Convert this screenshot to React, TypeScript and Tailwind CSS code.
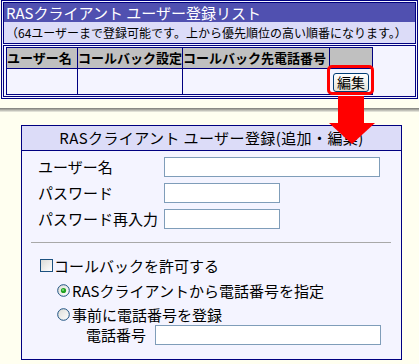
import React from 'react';

const font = "font-['Noto_Sans_CJK_JP','Noto_Sans_CJK_SC',sans-serif]";

function CheckBox() {
    return (
        <span className="inline-block w-[13px] h-[13px] border border-[#1c5180] bg-gradient-to-br from-[#dcdcd7] to-white" />
    );
}

function Radio({ checked }: { checked?: boolean }) {
    return (
        <svg width="13" height="13" viewBox="0 0 13 13">
            <defs>
                <linearGradient id="rg" x1="0" y1="0" x2="1" y2="1">
                    <stop offset="0" stopColor="#dcdcd7" />
                    <stop offset="1" stopColor="#ffffff" />
                </linearGradient>
            </defs>
            <circle cx="6.5" cy="6.5" r="5.8" fill="url(#rg)" stroke="#1c5180" strokeWidth="1" />
            {checked && <circle cx="6.5" cy="6.5" r="2.6" fill="#21a121" />}
            {checked && <circle cx="6" cy="6" r="1" fill="#7ee07e" />}
        </svg>
    );
}

export default function App() {
    const input = 'h-[20px] border border-[#7f9db9] bg-white';

    return (
        <div className={`relative w-[419px] h-[364px] overflow-hidden bg-[#fffff0] text-black ${font}`}>
            {/* upper list panel */}
            <div className="ml-[1px] w-[417px] border border-[#000080] bg-[#f4f4ff] p-px">
                <div className="border border-[#000080]">
                    <div className="h-[19px] bg-[#5050b0] pl-[2px] text-[15px] leading-[19px] text-white whitespace-nowrap">
                        RASクライアント ユーザー登録リスト
                    </div>
                    <div className="h-[21px] bg-[#dcdcf8] pl-[2px] text-[12px] leading-[21px] whitespace-nowrap">
                        （64ユーザーまで登録可能です。上から優先順位の高い順番になります。）
                    </div>
                </div>
                <div className="mt-px border border-[#000080] p-px">
                    <table className="ml-px border-collapse table-fixed w-[366px]">
                        <colgroup>
                            <col className="w-[71px]" />
                            <col className="w-[105px]" />
                            <col className="w-[147px]" />
                            <col className="w-[43px]" />
                        </colgroup>
                        <thead>
                            <tr className="h-[21px] bg-[#c0c0c0] text-[13px] font-bold leading-[20px]">
                                <th className="border border-[#000080] p-0 text-left whitespace-nowrap">ユーザー名</th>
                                <th className="border border-[#000080] p-0 text-left whitespace-nowrap">コールバック設定</th>
                                <th className="border border-[#000080] p-0 text-left whitespace-nowrap">コールバック先電話番号</th>
                                <th className="border border-[#000080] p-0"></th>
                            </tr>
                        </thead>
                        <tbody>
                            <tr className="h-[24px]">
                                <td className="border border-[#000080] p-0"></td>
                                <td className="border border-[#000080] p-0"></td>
                                <td className="border border-[#000080] p-0"></td>
                                <td className="border border-[#000080] p-0 text-center align-bottom">
                                    <button className="mb-[2px] h-[19px] w-[36px] rounded-[3px] border border-[#003c74] bg-gradient-to-b from-white to-[#e6e3d6] text-[14px] leading-[16px]">
                                        編集
                                    </button>
                                </td>
                            </tr>
                        </tbody>
                    </table>
                </div>
            </div>

            {/* screenshot edge */}
            <div className="mt-[9px] h-[4px] bg-gradient-to-b from-[#7c7c78] to-[#f0f0e4]" />

            {/* lower edit panel */}
            <div className="ml-[21px] mt-[13px] w-[381px] h-[235px] border border-[#000080] bg-[#f4f4ff]">
                <div className="h-[25px] border-b border-[#000080] bg-[#dcdcf8] text-center text-[15px] leading-[24px] tracking-[0.4px] whitespace-nowrap">
                    RASクライアント ユーザー登録(追加・編集)
                </div>
                <div className="pt-[6px] text-[15px] leading-[20px]">
                    <div className="flex items-center pl-[16px]">
                        <span className="w-[126px]">ユーザー名</span>
                        <span className={`${input} w-[216px]`} />
                    </div>
                    <div className="mt-[6px] flex items-center pl-[16px]">
                        <span className="w-[126px]">パスワード</span>
                        <span className={`${input} w-[116px]`} />
                    </div>
                    <div className="mt-[6px] flex items-center pl-[16px]">
                        <span className="w-[126px] whitespace-nowrap">パスワード再入力</span>
                        <span className={`${input} w-[116px]`} />
                    </div>

                    <div className="mt-[13px] ml-[9px] mr-[10px] h-px bg-[#a8a8a8]" />

                    <div className="mt-[13px] flex h-[20px] items-center pl-[18px]">
                        <CheckBox />
                        <span className="ml-px">コールバックを許可する</span>
                    </div>
                    <div className="mt-[5px] flex h-[20px] items-center gap-[2px] pl-[35px]">
                        <Radio checked />
                        <span>RASクライアントから電話番号を指定</span>
                    </div>
                    <div className="mt-[4px] flex h-[20px] items-center gap-[2px] pl-[35px]">
                        <Radio />
                        <span>事前に電話番号を登録</span>
                    </div>
                    <div className="flex items-center pl-[64px]">
                        <span className="w-[69px]">電話番号</span>
                        <span className={`${input} w-[226px]`} />
                    </div>
                </div>
            </div>

            {/* annotation: red highlight + arrow */}
            <div className="absolute left-[327px] top-[65px] h-[30px] w-[47px] rounded-[5px] border-[3px] border-[#ff0000]" />
            <svg className="absolute left-[329px] top-[96px]" width="46" height="50" viewBox="0 0 46 50">
                <rect x="9" y="0" width="26" height="27" fill="#ff0000" />
                <polygon points="0,27 46,27 23,48" fill="#ff0000" />
            </svg>
        </div>
    );
}
